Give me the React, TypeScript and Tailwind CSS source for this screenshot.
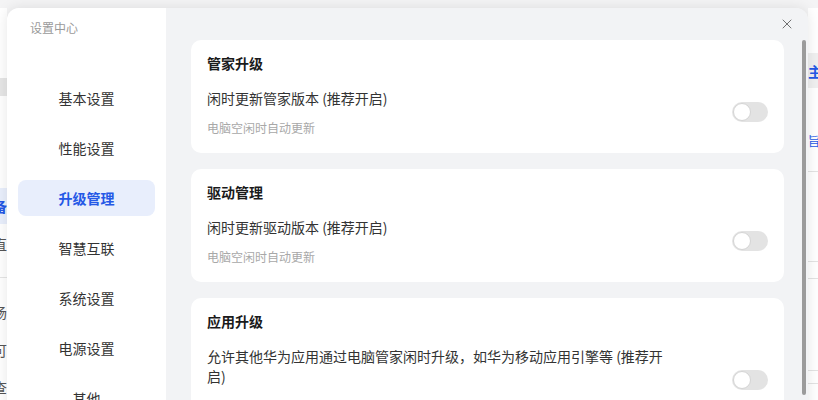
import { X } from "lucide-react";

const NAV = ["基本设置", "性能设置", "升级管理", "智慧互联", "系统设置", "电源设置", "其他"];

const CARDS = [
  {
    title: "管家升级",
    label: "闲时更新管家版本 (推荐开启)",
    desc: "电脑空闲时自动更新",
  },
  {
    title: "驱动管理",
    label: "闲时更新驱动版本 (推荐开启)",
    desc: "电脑空闲时自动更新",
  },
  {
    title: "应用升级",
    label: "允许其他华为应用通过电脑管家闲时升级，如华为移动应用引擎等 (推荐开启)",
    desc: "电脑空闲时自动更新",
  },
];

function Toggle() {
  return (
    <div className="w-[36px] h-[20px] rounded-full bg-[#e3e3e3] flex items-center px-[1px] shrink-0">
      <div className="w-[18px] h-[18px] rounded-full bg-white border border-[#d4d4d4]" />
    </div>
  );
}

// page behind the dialog, only its edges show
function BackLeft() {
  return (
    <div className="w-[7px] h-full bg-white overflow-hidden flex flex-col text-[14px] leading-5 text-[#555]">
      <div className="h-[70px]" />
      <div className="h-[18px] bg-[#e6e6e6]" />
      <div className="h-[92px]" />
      <div className="h-[36px] bg-[#e9effc] flex items-center justify-end text-[#2458e6] font-bold">
        <span className="whitespace-nowrap">设备</span>
      </div>
      <div className="h-[10px]" />
      <div className="h-[20px] flex items-center justify-end">
        <span className="whitespace-nowrap">垂直</span>
      </div>
      <div className="h-[23px]" />
      <div className="h-px bg-[#e5e5e5]" />
      <div className="h-[24px]" />
      <div className="h-[20px] flex items-center justify-end">
        <span className="whitespace-nowrap">市场</span>
      </div>
      <div className="h-[18px]" />
      <div className="h-[20px] flex items-center justify-end">
        <span className="whitespace-nowrap">许可</span>
      </div>
      <div className="h-[17px]" />
      <div className="h-[20px] flex items-center justify-end">
        <span className="whitespace-nowrap">检查</span>
      </div>
    </div>
  );
}

function BackRight() {
  return (
    <div className="w-[10px] h-full bg-white overflow-hidden flex flex-col text-[14px] leading-5 text-[#2458e6]">
      <div className="h-[45px]" />
      <div className="h-[35px] bg-[#f0f0f0] flex items-center">
        <span className="whitespace-nowrap font-bold">主页</span>
      </div>
      <div className="h-[43px]" />
      <div className="h-[20px] flex items-center text-[12px]">
        <span className="whitespace-nowrap">旨在</span>
      </div>
      <div className="h-[20px]" />
      <div className="h-px bg-[#e3e3e3]" />
      <div className="h-[89px]" />
      <div className="h-px bg-[#e3e3e3]" />
      <div className="h-[16px]" />
      <div className="h-px bg-[#e3e3e3]" />
      <div className="h-[91px]" />
      <div className="h-px bg-[#e3e3e3]" />
      <div className="h-[12px]" />
      <div className="h-px bg-[#e3e3e3]" />
    </div>
  );
}

export default function App() {
  return (
    <div
      className="relative w-[818px] h-[400px] overflow-hidden bg-[#f4f4f5]"
      style={{ fontFamily: '"Noto Sans CJK SC", "Noto Sans", sans-serif' }}
    >
      {/* Background page */}
      <div className="flex h-full pt-[8px]">
        <BackLeft />
        <div className="flex-1" />
        <BackRight />
      </div>

      {/* Settings dialog */}
      <div className="absolute left-[7px] top-[8px] w-[801px] h-[420px] rounded-[12px] overflow-hidden flex shadow-[0_0_14px_rgba(0,0,0,0.10)]">
        <nav className="w-[159px] bg-white px-[11px] pt-[12px] shrink-0">
          <div className="pl-[12px] text-[12px] leading-4 text-[#9a9a9a]">设置中心</div>
          <div className="mt-[44px] flex flex-col gap-[14px]">
            {NAV.map((n) => (
              <div
                key={n}
                className={
                  n === "升级管理"
                    ? "h-9 rounded-lg bg-[#e8eefc] flex items-center justify-center text-[14px] font-bold text-[#2458e6]"
                    : "h-9 rounded-lg flex items-center justify-center text-[14px] text-[#333]"
                }
              >
                {n}
              </div>
            ))}
          </div>
        </nav>

        <div className="flex-1 bg-[#f2f3f5] flex pl-[25px] pt-[32px]">
          <div className="w-[593px] flex flex-col gap-4">
            {CARDS.map((c) => (
              <div key={c.title} className="bg-white rounded-[10px] pl-4 pr-4 pt-[13px] pb-[17px]">
                <h3 className="text-[14px] leading-5 font-bold text-[#1a1a1a]">{c.title}</h3>
                <div className="mt-[15px] flex items-center justify-between">
                  <div className="w-[464px]">
                    <p className="text-[14px] leading-5 text-[#333]">{c.label}</p>
                    <p className="mt-[12px] text-[12px] leading-4 text-[#a8a8a8]">{c.desc}</p>
                  </div>
                  <Toggle />
                </div>
              </div>
            ))}
          </div>
          <div className="ml-[18px] w-[4px] h-[355px] rounded-full bg-[#9b9b9b]" />
        </div>

        <button className="absolute top-[8px] right-[13px] text-[#666]">
          <X className="w-[16px] h-[16px]" strokeWidth={1.4} />
        </button>
      </div>
    </div>
  );
}
